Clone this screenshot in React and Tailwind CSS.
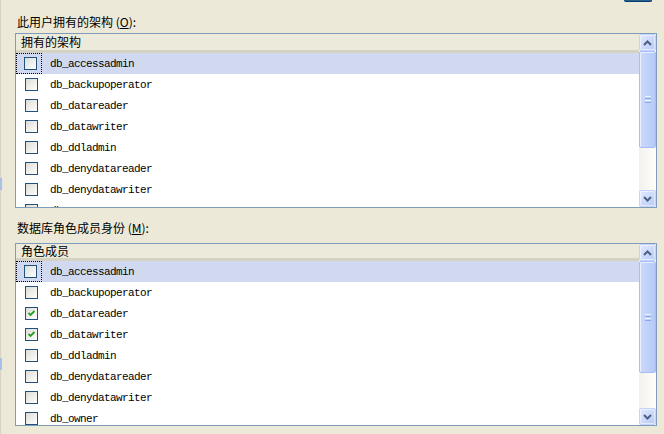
import React from 'react'

const ROLES = [
  'db_accessadmin',
  'db_backupoperator',
  'db_datareader',
  'db_datawriter',
  'db_ddladmin',
  'db_denydatareader',
  'db_denydatawriter',
  'db_owner',
]

// XP 风格复选框
function CheckBox({ checked }) {
  return (
    <span className="flex h-[13px] w-[13px] items-center justify-center border border-[#1C5180] bg-linear-to-br from-[#DCDCD6] to-white">
      {checked && (
        <svg width="7" height="7" viewBox="0 0 7 7">
          <path d="M0.5 3 L2.5 5 L6.5 1" fill="none" stroke="#21A121" strokeWidth="1.8" />
        </svg>
      )}
    </span>
  )
}

function Arrow({ up }) {
  return (
    <svg width="9" height="6" viewBox="0 0 9 6">
      <path
        d={up ? 'M1 5 L4.5 1.5 L8 5' : 'M1 1 L4.5 4.5 L8 1'}
        fill="none"
        stroke="#4D6185"
        strokeWidth="2"
      />
    </svg>
  )
}

function ScrollButton({ up }) {
  return (
    <div className="flex h-[17px] w-[17px] items-center justify-center rounded-[2px] border border-[#C3D3FD] bg-linear-to-br from-[#E1EAFE] to-[#B8CBF8] shadow-[inset_0_0_0_1px_#ffffff80]">
      <Arrow up={up} />
    </div>
  )
}

function ScrollBar({ thumb }) {
  return (
    <div className="flex w-[17px] flex-col bg-linear-to-r from-[#F3F1EC] to-[#FEFEFB]">
      <ScrollButton up />
      <div className="flex-1">
        <div
          className="flex flex-col items-center justify-center gap-px rounded-[2px] border border-[#A8BEF5] bg-linear-to-r from-[#CBDAFC] to-[#B6CAF8] shadow-[inset_1px_1px_0_#ffffffa0]"
          style={{ height: thumb }}
        >
          <span className="h-px w-[6px] bg-[#EEF4FE]" />
          <span className="h-px w-[6px] bg-[#8CA8EA]" />
          <span className="h-px w-[6px] bg-[#EEF4FE]" />
          <span className="h-px w-[6px] bg-[#8CA8EA]" />
        </div>
      </div>
      <ScrollButton />
    </div>
  )
}

function ListBox({ title, checked, height, headerH, thumb }) {
  return (
    <div className="flex w-[642px] border border-[#7F9DB9] bg-white" style={{ height }}>
      <div className="flex min-w-0 flex-1 flex-col overflow-hidden">
        <div
          className="flex shrink-0 items-center border-b-[3px] border-[#D6D2C2] bg-[#EBEADB] pl-[5px] text-[12px] leading-none shadow-[0_1px_0_#CBC7B8]"
          style={{ height: headerH }}
        >
          {title}
        </div>
        {ROLES.map((r, i) => (
          <div
            key={r}
            className={`flex h-[21px] shrink-0 items-center ${i === 0 ? 'bg-[#D0D9F0]' : ''}`}
          >
            <div
              className={`flex h-[21px] w-[26px] items-center justify-end pr-[4px] ${
                i === 0 ? 'border border-dotted border-black' : ''
              }`}
            >
              <CheckBox checked={checked.includes(r)} />
            </div>
            <span className="pl-[8px] pt-[2px] font-['Liberation_Mono',monospace] text-[11px] leading-none tracking-[-0.6px]">
              {r}
            </span>
          </div>
        ))}
      </div>
      <ScrollBar thumb={thumb} />
    </div>
  )
}

export default function App() {
  return (
    <div className="relative h-[434px] w-[664px] overflow-hidden bg-[#ECE9D8] pl-[15px] font-['Noto_Sans_CJK_SC','Noto_Sans',sans-serif] text-black">
      {/* 左侧窗口边缘 */}
      <div className="absolute left-0 top-0 h-full w-px bg-[#D8D4C4]" />
      <div className="absolute left-0 top-[178px] h-[12px] w-[2px] bg-[#A9BEE8]" />
      <div className="absolute left-0 top-[358px] h-[12px] w-[2px] bg-[#A9BEE8]" />

      {/* 顶部按钮的下沿 */}
      <div className="flex h-[14px] items-start">
        <div className="ml-[609px] h-[2px] w-[28px] rounded-b-[2px] border-x border-b border-[#003C74] bg-[#2A5F8A]" />
      </div>

      <div className="ml-[2px] flex h-[16px] items-center text-[12px] leading-none">
        此用户拥有的架构 (<span className="underline">O</span>):
      </div>
      <div className="mt-[3px]">
        <ListBox title="拥有的架构" checked={[]} height={175} headerH={19} thumb={97} />
      </div>

      <div className="ml-[2px] mt-[12px] flex h-[16px] items-center text-[12px] leading-none">
        数据库角色成员身份 (<span className="underline">M</span>):
      </div>
      <div className="mt-[7px]">
        <ListBox
          title="角色成员"
          checked={['db_datareader', 'db_datawriter']}
          height={183}
          headerH={17}
          thumb={112}
        />
      </div>
    </div>
  )
}
